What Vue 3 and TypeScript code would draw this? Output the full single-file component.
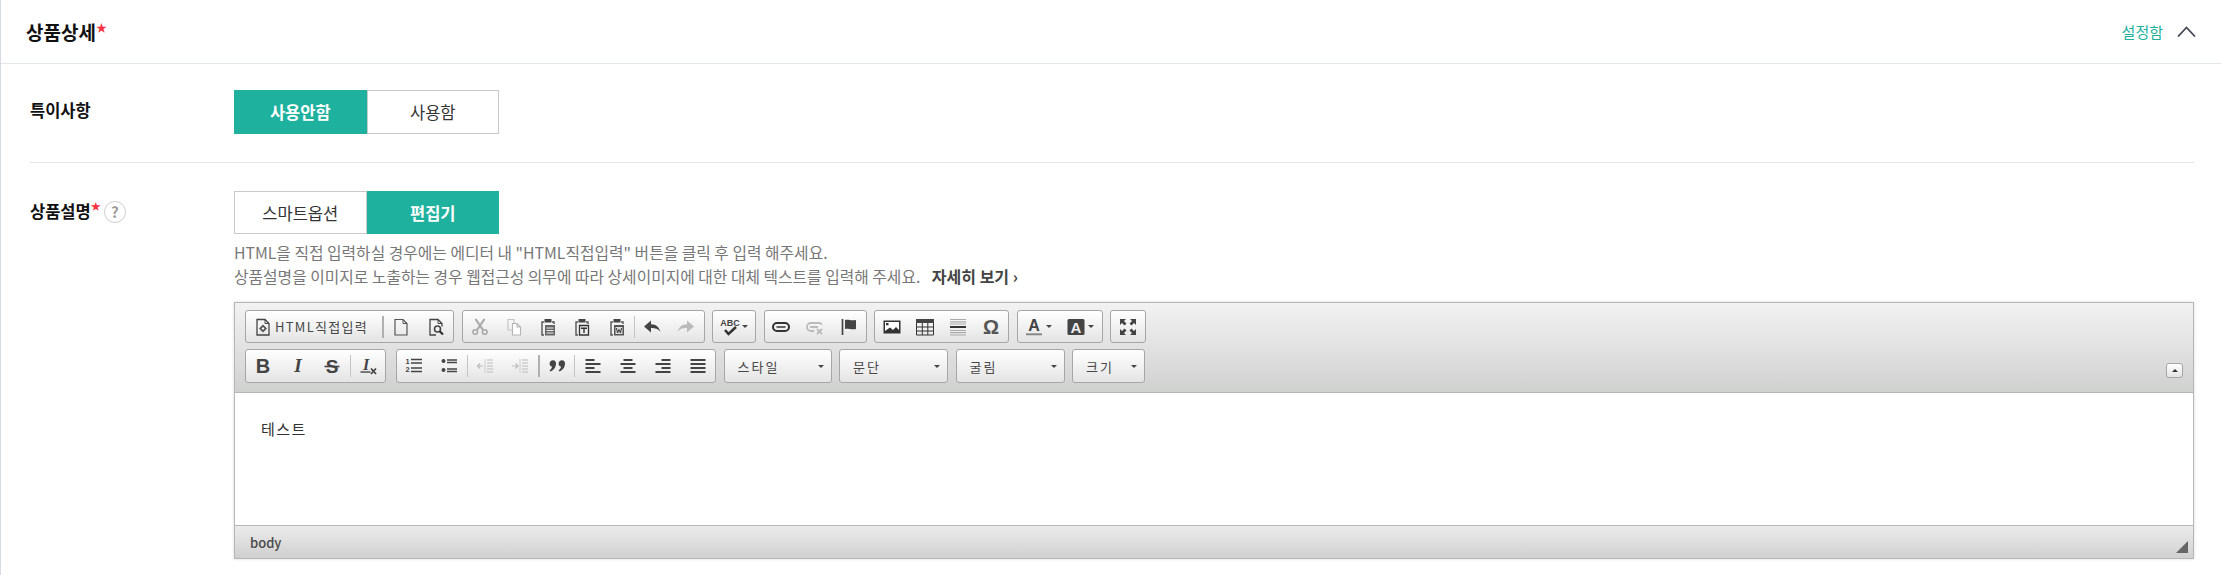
<script setup lang="ts">
interface Shape {
  d?: string
  fill?: string
  stroke?: string
  w?: number
  t?: string
  x?: number
  y?: number
  size?: number
  bold?: boolean
  italic?: boolean
  serif?: boolean
}

interface Item {
  icon?: string
  label?: string
  combo?: string
  sep?: boolean
  strong?: boolean
  arrow?: boolean
}

interface Group {
  width: number
  items: Item[]
  gapBefore?: boolean
}

const f = (d: string, fill = '#444'): Shape => ({ d, fill })
const s = (d: string, stroke = '#444', w = 1.3): Shape => ({ d, stroke, w })
const t = (text: string, x: number, y: number, size: number, fill = '#444', bold = true, italic = false, serif = false): Shape => ({
  t: text, x, y, size, fill, bold, italic, serif,
})

const clip = [
  s('M5 4H3v13h2', '#555', 1.4),
  s('M13 4h2v2', '#555', 1.4),
  f('M5.5 1h7v3.5h-7z', '#444'),
]

const icons: Record<string, Shape[]> = {
  source: [s('M3 1.5h8l4 4v11.5H3z', '#444', 1.3), s('M11 1.5v4h4', '#444', 1), f('M9 6.5l4 4l-4 4l-4-4z', '#555'), f('M9 9l1.5 1.5L9 12l-1.5-1.5z', '#fff')],
  newpage: [s('M3 1.5h8l4 4v11.5H3z', '#555', 1.2), s('M11 1.5v4h4', '#555', 1)],
  preview: [s('M9 17H3V1.5h8l4 4v3', '#444', 1.3), s('M11 1.5v4h4', '#444', 1), s('M13.5 11a3 3 0 1 1-6 0a3 3 0 1 1 6 0', '#444', 1.6), s('M12.7 13.2l3.3 3.3', '#333', 2.2)],
  cut: [s('M4.5 1l7.5 11M13.5 1L6 12', '#aaa', 2.2), s('M6.5 14a2.3 2.3 0 1 1-4.6 0a2.3 2.3 0 1 1 4.6 0M16 14a2.3 2.3 0 1 1-4.6 0a2.3 2.3 0 1 1 4.6 0', '#aaa', 1.6)],
  copy: [s('M9 5V1.5H3V12h4', '#c4c4c4', 1.1), f('M7.5 5.5H12l3.5 3.5v8h-8z', '#fff'), s('M7.5 5.5H12l3.5 3.5v8h-8zM12 5.5V9h3.5', '#b4b4b4', 1.1)],
  paste: [...clip, f('M6 7h10v10.5H6z', '#666'), s('M7.5 10h7M7.5 12.5h7M7.5 15h7', '#eee', 1)],
  pastetext: [...clip, s('M6.5 7.5h9v9.5h-9z', '#333', 1.3), f('M8 9.5h6v1.4h-2.3V15h-1.4v-4.1H8z', '#333')],
  pasteword: [...clip, f('M6 7h10v10.5H6z', '#555'), f('M7.5 9h7v7h-7z', '#ddd'), s('M8.5 10l1 5l1.5-3.5l1.5 3.5l1-5', '#333', 1)],
  undo: [f('M1 8.5l7-6v3.8c5 0 8 2.7 9.5 7.7c-2.6-3.2-5-3.9-9.5-3.9v4.4z', '#444')],
  redo: [f('M17 8.5l-7-6v3.8c-5 0-8 2.7-9.5 7.7c2.6-3.2 5-3.9 9.5-3.9v4.4z', '#bbb')],
  spell: [t('ABC', 9, 8, 9, '#444', true), s('M4 12l3.5 4l7.5-7', '#333', 2.6)],
  link: [s('M5 5h8a4 4 0 0 1 0 8H5a4 4 0 0 1 0-8z', '#333', 2), s('M4.5 9h9', '#333', 1.5)],
  unlink: [s('M9 5H5a4 4 0 0 0 0 8h3M9 5h4a4 4 0 0 1 3 1.5M4 9h8', '#bbb', 1.8), s('M11 11l5 5M16 11l-5 5', '#bbb', 1.8)],
  anchor: [s('M2.5 1v16', '#444', 1.7), f('M5 2c3-1 6 1 11 0v9c-5 1-8-1-11 0z', '#444')],
  image: [f('M.5 2.5h17v13H.5z', '#333'), f('M2 4h14v8l-3-3l-3 3l-3-2.5L2 13z', '#fff'), f('M3 5h2.5v2.3H3z', '#333')],
  table: [f('M0 1h18v4H0z', '#444'), s('M.5 5v12h17V5M6.3 5v12M11.8 5v12M.5 9h17M.5 13h17', '#333', 1)],
  hr: [s('M1 1.5h16M1 3.8h16M1 6h16M1 12.5h16M1 14.7h16M1 17h16', '#aaa', 1.2), s('M1 9h16', '#333', 2)],
  omega: [t('Ω', 9, 16, 20, '#555')],
  color: [t('A', 9, 13, 16, '#444'), s('M1 16.3h16', '#888', 2)],
  bgcolor: [f('M2 1h14q1.5 0 1.5 1.5v13q0 1.5-1.5 1.5H2Q.5 17 .5 15.5v-13Q.5 1 2 1z', '#444'), t('A', 9, 14.5, 15, '#eee')],
  maximize: [
    f('M1 1h6L5 3l2.5 2.5l-2 2L3 5L1 7z', '#444'),
    f('M17 1v6l-2-2l-2.5 2.5l-2-2L13 3l-2-2z', '#444'),
    f('M1 17v-6l2 2l2.5-2.5l2 2L5 15l2 2z', '#444'),
    f('M17 17h-6l2-2l-2.5-2.5l2-2L15 13l2-2z', '#444'),
  ],
  bold: [t('B', 9, 15.5, 20, '#444')],
  italic: [t('I', 9, 15, 19, '#444', true, true, true)],
  strike: [t('S', 9, 15.5, 19, '#444'), s('M1.5 9.5h15', '#444', 1.6)],
  clear: [t('I', 7, 13, 16, '#444', true, true, true), s('M1.5 15h10', '#444', 1.4), s('M12 11.5l5 5.5M17 11.5l-5 5.5', '#444', 1.8)],
  ol: [t('1', 2.5, 7, 7.5, '#444'), t('2', 2.5, 15, 7.5, '#444'), s('M6 2.5h11M6 6h11M6 11h11M6 14.5h11', '#444', 1.7)],
  ul: [f('M1.5 4a2 2 0 1 1 4 0a2 2 0 1 1-4 0M1.5 13a2 2 0 1 1 4 0a2 2 0 1 1-4 0', '#444'), s('M7 3h10M7 5.5h10M7 12h10M7 14.5h10', '#444', 1.5)],
  outdent: [s('M9 2v14', '#ccc', 1), s('M11 3h6M11 6h6M11 9h6M11 12h6M11 15h6', '#bbb', 1.2), s('M1 9h6M4 6.5L1.5 9L4 11.5', '#bbb', 1.2)],
  indent: [s('M9 2v14', '#ccc', 1), s('M11 3h6M11 6h6M11 9h6M11 12h6M11 15h6', '#bbb', 1.2), s('M1 9h6M4.5 6.5L7 9l-2.5 2.5', '#bbb', 1.2)],
  quote: [
    f('M8 6.5a3.2 3.2 0 1 0-4 3.1c-.2 1.7-1 2.9-2.4 3.8l.8 1.1C5.5 13.2 8 10.5 8 6.5z', '#444'),
    f('M17 6.5a3.2 3.2 0 1 0-4 3.1c-.2 1.7-1 2.9-2.4 3.8l.8 1.1c3.1-1.3 5.6-4 5.6-8z', '#444'),
  ],
  left: [s('M1.5 3h9M1.5 7h15M1.5 11h9M1.5 15h15', '#444', 2)],
  center: [s('M4.5 3h9M1.5 7h15M4.5 11h9M1.5 15h15', '#444', 2)],
  right: [s('M7.5 3h9M1.5 7h15M7.5 11h9M1.5 15h15', '#444', 2)],
  justify: [s('M1.5 3h15M1.5 7h15M1.5 11h15M1.5 15h15', '#444', 2)],
}

const row1: Group[] = [
  { width: 209, items: [{ icon: 'source', label: 'HTML직접입력' }, { sep: true, strong: true }, { icon: 'newpage' }, { icon: 'preview' }] },
  { width: 243, items: [{ icon: 'cut' }, { icon: 'copy' }, { icon: 'paste' }, { icon: 'pastetext' }, { icon: 'pasteword' }, { sep: true }, { icon: 'undo' }, { icon: 'redo' }] },
  { width: 44, items: [{ icon: 'spell', arrow: true }] },
  { width: 103, items: [{ icon: 'link' }, { icon: 'unlink' }, { icon: 'anchor' }] },
  { width: 135, items: [{ icon: 'image' }, { icon: 'table' }, { icon: 'hr' }, { icon: 'omega' }] },
  { width: 86, items: [{ icon: 'color', arrow: true }, { icon: 'bgcolor', arrow: true }] },
  { width: 36, items: [{ icon: 'maximize' }] },
]

const row2: Group[] = [
  { width: 141, items: [{ icon: 'bold' }, { icon: 'italic' }, { icon: 'strike' }, { sep: true }, { icon: 'clear' }] },
  { width: 320, gapBefore: true, items: [{ icon: 'ol' }, { icon: 'ul' }, { sep: true }, { icon: 'outdent' }, { icon: 'indent' }, { sep: true, strong: true }, { icon: 'quote' }, { sep: true }, { icon: 'left' }, { icon: 'center' }, { icon: 'right' }, { icon: 'justify' }] },
  { width: 108, items: [{ combo: '스타일' }] },
  { width: 109, items: [{ combo: '문단' }] },
  { width: 109, items: [{ combo: '굴림' }] },
  { width: 73, items: [{ combo: '크기' }] },
]

const rows = [row1, row2]
</script>

<template>
  <div class="page">
    <header class="head">
      <h2 class="title">상품상세<span class="star">★</span></h2>
      <div class="status">
        <span class="status-text">설정함</span>
        <svg class="chevron" width="19" height="11" viewBox="0 0 19 11">
          <path d="M1 10.5L9.5 1.5L18 10.5" fill="none" stroke="#444a55" stroke-width="1.8" />
        </svg>
      </div>
    </header>

    <div class="body">
      <section class="row first">
        <div class="label">특이사항</div>
        <div class="field">
          <div class="toggle tall">
            <button class="seg on">사용안함</button>
            <button class="seg">사용함</button>
          </div>
        </div>
      </section>

      <section class="row second">
        <div class="label">
          상품설명<span class="star small">★</span>
          <span class="help">?</span>
        </div>
        <div class="field">
          <div class="toggle">
            <button class="seg">스마트옵션</button>
            <button class="seg on">편집기</button>
          </div>
          <p class="note">
            HTML을 직접 입력하실 경우에는 에디터 내 "HTML직접입력" 버튼을 클릭 후 입력 해주세요.<br />
            상품설명을 이미지로 노출하는 경우 웹접근성 의무에 따라 상세이미지에 대한 대체 텍스트를 입력해 주세요.
            <a class="more">자세히 보기 ›</a>
          </p>

          <div class="editor">
            <div class="toolbar">
              <div class="tool-rows">
                <div v-for="(row, r) in rows" :key="r" class="tool-row">
                  <div
                    v-for="(group, g) in row"
                    :key="g"
                    class="group"
                    :class="{ 'gap-before': group.gapBefore }"
                    :style="{ width: group.width + 'px' }"
                  >
                    <template v-for="(item, n) in group.items" :key="n">
                      <span v-if="item.sep" class="sep" :class="{ strong: item.strong }"></span>
                      <span v-else-if="item.combo" class="combo">
                        <span class="combo-text">{{ item.combo }}</span>
                        <i class="caret"></i>
                      </span>
                      <span v-else class="btn" :class="{ wide: item.label }">
                        <svg class="ico" width="18" height="18" viewBox="0 0 18 18">
                          <template v-for="(p, k) in icons[item.icon!]" :key="k">
                            <path v-if="p.d" :d="p.d" :fill="p.fill || 'none'" :stroke="p.stroke || 'none'" :stroke-width="p.w" />
                            <text
                              v-else
                              :x="p.x"
                              :y="p.y"
                              :font-size="p.size"
                              :font-weight="p.bold ? 700 : 400"
                              :font-style="p.italic ? 'italic' : 'normal'"
                              :font-family="p.serif ? 'Liberation Serif, serif' : 'Liberation Sans, sans-serif'"
                              :fill="p.fill"
                              text-anchor="middle"
                            >{{ p.t }}</text>
                          </template>
                        </svg>
                        <span v-if="item.label" class="btn-label">{{ item.label }}</span>
                        <i v-if="item.arrow" class="caret small"></i>
                      </span>
                    </template>
                  </div>
                </div>
              </div>
              <span class="collapser"><i class="up"></i></span>
            </div>
            <div class="content">테스트</div>
            <div class="statusbar">
              <span class="path">body</span>
              <i class="resizer"></i>
            </div>
          </div>
        </div>
      </section>
    </div>
  </div>
</template>

<style scoped>
.page {
  height: 575px;
  overflow: hidden;
  box-sizing: border-box;
  border-left: 1px solid #d9dbe4;
  background: #fff;
  color: #222;
  font-family: "Noto Sans CJK KR", "Liberation Sans", sans-serif;
}

.head {
  height: 64px;
  box-sizing: border-box;
  display: flex;
  align-items: center;
  justify-content: space-between;
  padding: 0 25px;
  border-bottom: 1px solid #e4e6ee;
}

.title {
  margin: 0;
  font-size: 19px;
  line-height: 28px;
  font-weight: 700;
  color: #111;
}

.star {
  color: #f5333f;
  font-size: 11px;
  font-weight: 400;
  line-height: 1;
  vertical-align: 8px;
}

.star.small {
  font-size: 10px;
}

.status {
  display: flex;
  align-items: center;
  gap: 14px;
}

.status-text {
  font-size: 15px;
  color: #1eb19e;
}

.body {
  padding: 0 27px 0 29px;
}

.row {
  display: flex;
}

.first {
  padding: 26px 0 28px;
  border-bottom: 1px solid #e4e6ee;
}

.second {
  padding-top: 28px;
}

.label {
  flex: 0 0 204px;
  font-size: 16.5px;
  font-weight: 700;
  line-height: 22px;
  padding-top: 9px;
  color: #111;
}

.help {
  display: inline-block;
  box-sizing: border-box;
  width: 22px;
  height: 22px;
  margin-left: 3px;
  border: 1.5px solid #cfcfcf;
  border-radius: 50%;
  text-align: center;
  font-size: 15px;
  line-height: 19px;
  font-weight: 700;
  color: #999;
}

.field {
  flex: 1;
  min-width: 0;
}

.toggle {
  display: grid;
  grid-template-columns: 1fr 1fr;
  width: 265px;
  height: 43px;
}

.toggle.tall {
  height: 44px;
}

.seg {
  border: 1px solid #c9c9c9;
  background: #fff;
  color: #333;
  font: inherit;
  font-size: 16.5px;
  padding: 0;
}

.seg.on {
  border-color: #1eb19e;
  background: #1eb19e;
  color: #fff;
  font-weight: 700;
}

.note {
  margin: 7px 0 13px;
  font-size: 15.8px;
  line-height: 24px;
  color: #777;
}

.more {
  margin-left: 8px;
  font-size: 16px;
  line-height: 1;
  font-weight: 700;
  color: #444;
}

.editor {
  border: 1px solid #b6b6b6;
  box-shadow: 0 0 3px rgba(0, 0, 0, 0.15);
}

.toolbar {
  display: flex;
  justify-content: space-between;
  height: 90px;
  box-sizing: border-box;
  padding: 7px 10px 9px;
  background: linear-gradient(#f2f2f2, #cfd1cf);
  border-bottom: 1px solid #b6b6b6;
}

.tool-rows {
  display: flex;
  flex-direction: column;
  gap: 6px;
}

.tool-row {
  display: flex;
  gap: 7.5px;
  height: 33px;
}

.tool-row + .tool-row {
  height: 34px;
}

.group {
  display: flex;
  align-items: center;
  box-sizing: border-box;
  border: 1px solid #a6a6a6;
  border-radius: 3px;
  background: linear-gradient(#fff, #e4e4e4);
}

.gap-before {
  margin-left: 2.5px;
}

.btn {
  flex: 1;
  min-width: 0;
  display: flex;
  align-items: center;
  justify-content: center;
  gap: 3px;
}

.btn.wide {
  flex: 0 0 136px;
  justify-content: flex-start;
  padding-left: 8px;
  box-sizing: border-box;
}

.ico {
  flex: none;
  display: block;
  overflow: visible;
}

.btn-label {
  font-size: 13px;
  letter-spacing: 1.3px;
  color: #474747;
  white-space: nowrap;
}

.sep {
  flex: none;
  width: 1px;
  height: 22px;
  background: #c4c4c4;
}

.sep.strong {
  width: 2px;
  background: #b0b0b0;
}

.combo {
  flex: 1;
  display: flex;
  align-items: center;
  justify-content: space-between;
  padding: 0 7px 0 13px;
}

.combo-text {
  font-size: 13px;
  letter-spacing: 2px;
  color: #484848;
}

.caret {
  width: 0;
  height: 0;
  border-left: 3px solid transparent;
  border-right: 3px solid transparent;
  border-top: 3px solid #444;
}

.collapser {
  align-self: flex-end;
  margin-bottom: 5px;
  width: 17px;
  height: 15px;
  box-sizing: border-box;
  display: flex;
  align-items: center;
  justify-content: center;
  border: 1px solid #a6a6a6;
  border-radius: 3px;
  background: linear-gradient(#fff, #e4e4e4);
}

.up {
  width: 0;
  height: 0;
  border-left: 3px solid transparent;
  border-right: 3px solid transparent;
  border-bottom: 3px solid #333;
}

.content {
  height: 132px;
  box-sizing: border-box;
  padding: 24px 26px;
  font-size: 15px;
  line-height: 24px;
  letter-spacing: 1.4px;
  color: #333;
  background: #fff;
}

.statusbar {
  height: 33px;
  box-sizing: border-box;
  display: flex;
  align-items: center;
  justify-content: space-between;
  padding: 0 5px 0 15px;
  border-top: 1px solid #b6b6b6;
  background: linear-gradient(#ebebeb, #cfd1cf);
}

.path {
  font-size: 13px;
  font-weight: 500;
  color: #484848;
}

.resizer {
  align-self: flex-end;
  margin-bottom: 5px;
  width: 0;
  height: 0;
  border-left: 12px solid transparent;
  border-bottom: 12px solid #666;
}
</style>
